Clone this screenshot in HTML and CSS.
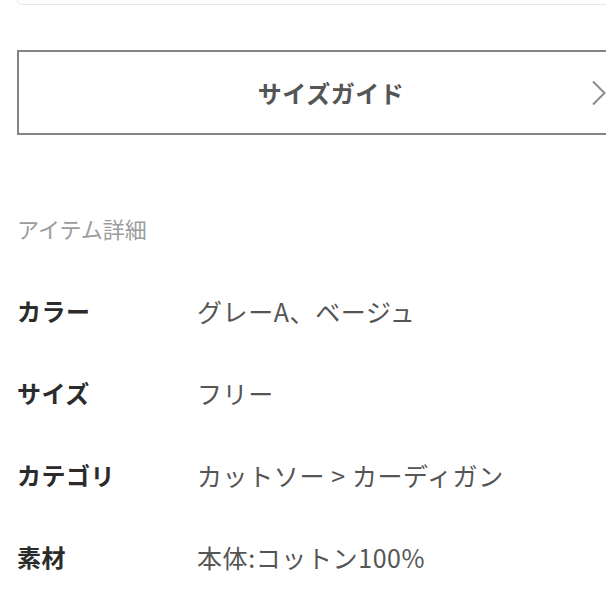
FILE: index.html
```html
<!DOCTYPE html>
<html lang="ja">
<head>
<meta charset="utf-8">
<link rel="stylesheet" href="styles.css">
</head>
<body>
<div class="page">
  <div class="top-card"></div>
  <div class="size-guide">
    <span class="size-guide-label">サイズガイド</span>
    <svg class="chevron" width="16" height="26" viewBox="0 0 16 26"><path d="M2 1.5 L13.5 13 L2 24.5" fill="none" stroke="#8a8a8a" stroke-width="2"/></svg>
  </div>
  <h2 class="details-heading">アイテム詳細</h2>
  <dl class="spec-list">
    <div class="spec-row"><dt>カラー</dt><dd>グレーA、ベージュ</dd></div>
    <div class="spec-row"><dt>サイズ</dt><dd>フリー</dd></div>
    <div class="spec-row"><dt>カテゴリ</dt><dd>カットソー &gt; カーディガン</dd></div>
    <div class="spec-row"><dt>素材</dt><dd>本体:コットン100%</dd></div>
  </dl>
</div>
</body>
</html>
```
FILE: styles.css
```css
html, body {
  margin: 0;
  padding: 0;
  background: #fff;
  overflow: hidden;
}
body {
  font-family: "Noto Sans CJK JP", "Noto Sans", sans-serif;
  width: 606px;
  height: 606px;
}
.page {
  padding-left: 17px;
}
.top-card {
  height: 4px;
  margin-right: -60px;
  border: 1px solid #e6e6e6;
  border-top: none;
  border-radius: 0 0 5px 5px;
}
.size-guide {
  margin-top: 45px;
  width: 624px;
  height: 81px;
  border: 2px solid #858585;
  display: grid;
  grid-template-columns: 1fr auto 1fr;
  align-items: center;
  box-sizing: content-box;
}
.size-guide-label {
  grid-column: 2;
  font-size: 24px;
  font-weight: 700;
  color: #555;
  line-height: 30px;
  letter-spacing: 0.5px;
}
.chevron {
  grid-column: 3;
  justify-self: end;
  margin-right: 36px;
}
.details-heading {
  margin: 78px 0 0;
  font-size: 22px;
  font-weight: 400;
  line-height: 30px;
  color: #9c9c9c;
}
.spec-list {
  margin: 27px 0 0;
}
.spec-row {
  display: grid;
  grid-template-columns: 180px 1fr;
  height: 82px;
  align-items: center;
}
.spec-row dt {
  font-size: 24px;
  font-weight: 700;
  color: #2b2b2b;
  line-height: 30px;
  letter-spacing: 0.5px;
}
.spec-row dd {
  margin: 0;
  font-size: 25px;
  font-weight: 400;
  color: #555;
  line-height: 30px;
  letter-spacing: 0.6px;
}
```
